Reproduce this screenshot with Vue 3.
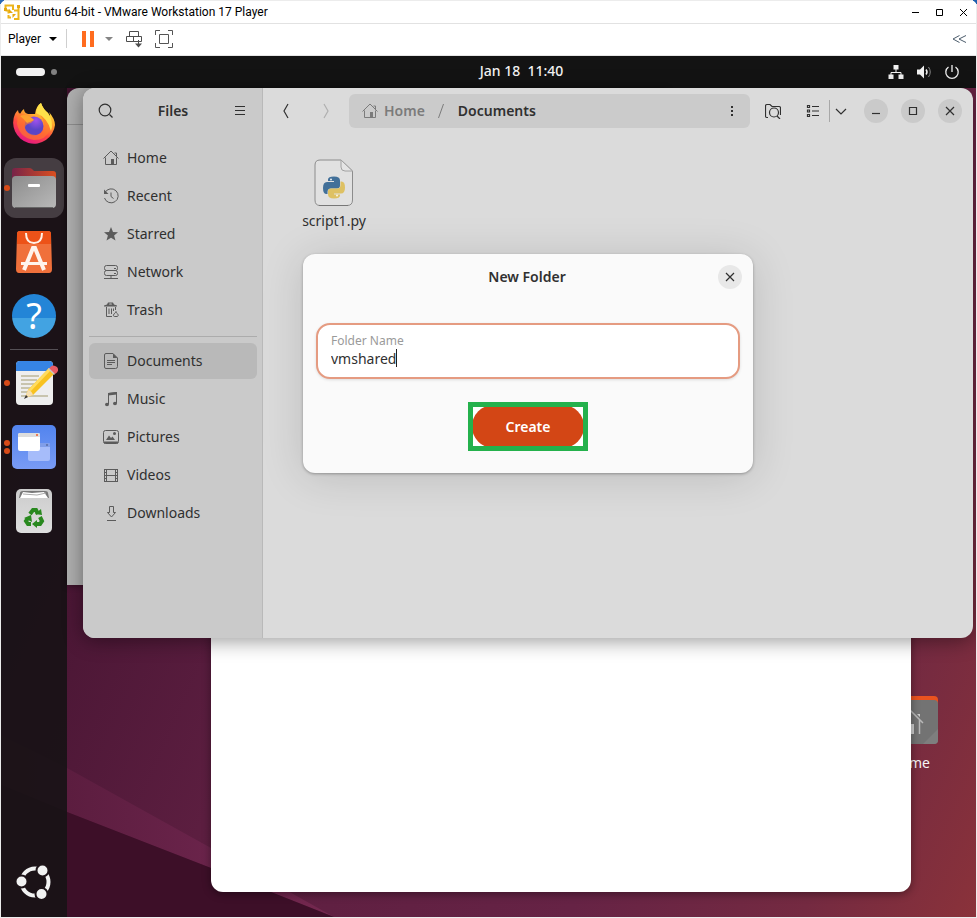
<script setup>
import { ref } from 'vue'

const folderName = ref('vmshared')

const homeLine = 'M.5 8.5 8 1 15.500 8.500M2.500 7.500V14.500H13.500V7.500M11.500 3H13.500V6'
const homeFill = 'M8 9h3v5.500H8z'

const places = [
  { name: 'Home', line: homeLine, fill: homeFill },
  { name: 'Recent', line: 'M2 4.5A7 7 0 1 1 1.5 10M8 4.5V8.5L10.5 10.5', fill: 'M1 1.5V6H5.5z' },
  { name: 'Starred', line: '', fill: 'M8 1l2 5 5 .3-3.900 3.200 1.400 5L8 11.700 3.500 14.500l1.400-5L1 6.300 6 6z' },
  { name: 'Network', line: 'M3.500 1.500h9a2 2 0 0 1 2 2v1a2 2 0 0 1-2 2h-9a2 2 0 0 1-2-2v-1a2 2 0 0 1 2-2zM3.500 6.500h9a2 2 0 0 1 2 2v1a2 2 0 0 1-2 2h-9a2 2 0 0 1-2-2v-1a2 2 0 0 1 2-2zM1 14.500h14M8 11.500v3', fill: 'M11 4h2v1h-2zM11 9h2v1h-2z' },
  { name: 'Trash', line: 'M3.500 5V14.500H9M6 6.500V12M8.500 6.500V12M10.500 6.500V9M12.500 5V8M13 9.500c0 1.500-2 1.500-2.500 3.500-.3 1.200.5 1.500 1.500 1.500h2c1 0 1.500-1 1-2s-1.500-.7-2-3z', fill: 'M1 4.500V3.500L4 2.500 5 .5H10L11 2.500 14 3.500V4.500zM6 2.500H9L8.500 1.500H6.500z' }
]

const folders = [
  { name: 'Documents', active: true, line: 'M3 .5H10L14.500 5V13.500a2 2 0 0 1-2 2H3a1.500 1.500 0 0 1-1.500-1.500V2A1.500 1.500 0 0 1 3 .5zM4 7.500H12M4 9.500H12M4 11.500H9', fill: 'M10 .5V5H14.500z' },
  { name: 'Music', line: 'M5.500 13V2.500L13.500 1.500V12', fill: 'M5 2 14 1V3.500L5 4.500zM2 13.500a2 1.800 0 1 0 4 0a2 1.800 0 1 0-4 0M10 12.500a2 1.800 0 1 0 4 0a2 1.800 0 1 0-4 0' },
  { name: 'Pictures', line: 'M2.500 1.500h11a2 2 0 0 1 2 2V12.500a2 2 0 0 1-2 2h-11a2 2 0 0 1-2-2V3.500a2 2 0 0 1 2-2z', fill: 'M3 11 6 6.500 8 9 9.500 7.500 12 11zM1 12.500H15V14.500H1zM10 4.500a1.500 1.500 0 1 0 3 0a1.500 1.500 0 1 0-3 0' },
  { name: 'Videos', line: 'M3.500 2V14.500M12.500 2V14.500M3.500 2.500H12.500M3.500 8.500H12.500M3.500 14.500H12.500M1.500 2V15M14.500 2V15', fill: 'M1 2h3v1H1zM1 5h3v1H1zM1 8h3v1H1zM1 11h3v1H1zM1 14h3v1H1zM12 2h3v1h-3zM12 5h3v1h-3zM12 8h3v1h-3zM12 11h3v1h-3zM12 14h3v1h-3z' },
  { name: 'Downloads', line: 'M6.500 1.500H10.500V7.500H12.500L8.500 12 4.500 7.500H6.500zM4 15.500H13', fill: '' }
]
</script>

<template>
  <div class="app">
    <header class="titlebar">
      <svg class="logo" viewBox="0 0 16 17" aria-hidden="true">
        <path d="M1.500 6V1.500H9V6M4.500 9.500V6.500H1.500M7 13.500H4.500V11M10 6.500H14.500V15H10M14.500 2V6" fill="none" stroke="#edb51c" stroke-width="2" />
        <path d="M5 5 9 9H5zM12 10 8.500 14V10zM13 1h3v3h-3zM0 4h3v3H0z" fill="#e6a80f" />
      </svg>
      <span class="caption">Ubuntu 64-bit - VMware Workstation 17 Player</span>
      <div class="frame-buttons">
        <button aria-label="Minimize"><svg viewBox="0 0 9 9"><path d="M1 4.500H8" /></svg></button>
        <button aria-label="Maximize"><svg viewBox="0 0 9 9"><path d="M1.500 1.500H7.500V7.500H1.500z" /></svg></button>
        <button aria-label="Close"><svg viewBox="0 0 9 9"><path d="M1 1 8 8M8 1 1 8" /></svg></button>
      </div>
    </header>

    <nav class="toolbar" aria-label="Player controls">
      <button class="player">Player <svg class="caret" viewBox="0 0 8 4"><path d="M0 0H8L4 4z" fill="#000" /></svg></button>
      <span class="divider"></span>
      <button class="pause" aria-label="Pause"><svg viewBox="0 0 12 16"><path d="M0 0H4V16H0zM8 0H12V16H8z" fill="#ff6c1f" /></svg></button>
      <button class="more" aria-label="Power options"><svg class="caret" viewBox="0 0 8 4"><path d="M0 0H8L4 4z" fill="#858585" /></svg></button>
      <button class="keys" aria-label="Send Ctrl+Alt+Del">
        <svg viewBox="0 0 18 18"><path d="M4.500 1.500H13.500V6.500H4.500zM1.500 6.500H8.500V11.500H1.500zM8.500 6.500H16.500V11.500H8.500zM13.500 10V15" fill="none" stroke="#4d4d4d" /><path d="M10 13.500H17L13.500 17.500z" fill="#4d4d4d" /></svg>
      </button>
      <button class="full" aria-label="Full screen">
        <svg viewBox="0 0 18 18"><path d="M.5 5V.5H5M13 .5H17.500V5M17.500 13V17.500H13M5 17.500H.5V13M4.500 4.500H13.500V13.500H4.500z" fill="none" stroke="#555" /></svg>
      </button>
      <button class="collapse" aria-label="Collapse toolbar">
        <svg viewBox="0 0 15 8"><path d="M7.500 .5 1 4 7.500 7.500M14 .5 7 4 14 7.500" fill="none" stroke="#4b5b6b" /></svg>
      </button>
    </nav>

    <main class="desktop">
      <svg class="wallpaper" viewBox="0 0 975 861" preserveAspectRatio="none" aria-hidden="true">
        <defs>
          <linearGradient id="wall" x1="0" y1="430" x2="975" y2="861" gradientUnits="userSpaceOnUse">
            <stop offset="0" stop-color="#431330" />
            <stop offset=".3" stop-color="#5c1e40" />
            <stop offset=".65" stop-color="#662345" />
            <stop offset=".85" stop-color="#742a41" />
            <stop offset="1" stop-color="#8a323a" />
          </linearGradient>
          <linearGradient id="beam" x1="0" x2="1"><stop stop-color="#551a3a" /><stop offset=".65" stop-color="#6b244b" /><stop offset="1" stop-color="#74284f" /></linearGradient>
        </defs>
        <path d="M0 0H975V861H0z" fill="url(#wall)" />
        <path d="M0 679 66 712 210 792 333 861 210 812 66 756 0 729z" fill="url(#beam)" />
        <path d="M0 729 66 756 210 812 270 836 333 861H0z" fill="#3d0f28" />
      </svg>

      <div class="topbar">
        <div class="workspaces"><i></i><b></b></div>
        <time class="clock">Jan 18&nbsp; 11:40</time>
        <div class="status">
          <svg viewBox="0 0 16 16"><path d="M5.500 1h5v4.500h-5zM.5 10.500h5V15h-5zM10.500 10.500h5V15h-5z" fill="#f2f2f2" /><path d="M8 5V8.500M3 11V8.500H13V11" fill="none" stroke="#f2f2f2" /></svg>
          <svg viewBox="0 0 16 16"><path d="M1 5.500H4L8 1.500V14.500L4 10.500H1z" fill="#f2f2f2" /><path d="M10 5.500Q12 8 10 10.500" fill="none" stroke="#f2f2f2" stroke-width="1.500" /><path d="M12.500 3Q16 8 12.500 13" fill="none" stroke="#888" /></svg>
          <svg viewBox="0 0 16 16"><path d="M4.500 3A6.200 6.200 0 1 0 11.500 3M8 1V8" fill="none" stroke="#f2f2f2" stroke-width="1.300" /></svg>
        </div>
      </div>

      <aside class="dock" aria-label="Dock">
        <div class="slot">
          <svg class="app-icon" viewBox="0 0 44 44">
            <defs>
              <linearGradient id="ff" x1=".8" y1="0" x2=".3" y2="1"><stop stop-color="#fff44f" /><stop offset=".35" stop-color="#ffad2d" /><stop offset=".65" stop-color="#ff4a40" /><stop offset="1" stop-color="#e31587" /></linearGradient>
              <radialGradient id="globe" cx=".6" cy=".2"><stop stop-color="#a052ed" /><stop offset="1" stop-color="#5a45c6" /></radialGradient>
            </defs>
            <path d="M3 12Q4 10 6 8Q6 11 8 12Q10 8 12 7Q12 11 16 12H23Q24 4 29 1Q31 7 36 11Q37 13 38 14Q38 12 37 10Q43 17 43 23A21 21 0 1 1 3 12z" fill="url(#ff)" />
            <circle cx="22" cy="24" r="9.500" fill="url(#globe)" />
            <path d="M6 10Q8 12 13 13L16 16Q22 16 22 18Q20 21 16 22Q13 23 13 26Q15 33 24 33Q32 32 32 24Q32 18 28 13Q38 17 38 28Q34 38 22 38Q8 36 5 22z" fill="#ff7b2c" opacity=".65" />
            <path d="M8 14Q15 11 22 18Q18 20 15 21Q12 17 8 14z" fill="#ffa22f" />
            <path d="M24 11Q25 4 29 1Q31 7 36 11Q42 20 39 29Q35 15 24 11z" fill="#ffe04a" />
          </svg>
        </div>
        <div class="slot">
          <div class="active-tile">
            <svg class="app-icon" viewBox="0 0 44 44">
              <defs><linearGradient id="fold" x1="0" x2="1" y2="0"><stop stop-color="#772348" /><stop offset="1" stop-color="#dc4f20" /></linearGradient><linearGradient id="metal" y2="1" x2="1"><stop stop-color="#8c8c8c" /><stop offset="1" stop-color="#b9b9b9" /></linearGradient></defs>
              <path d="M0 16V5Q0 2 3 2H17Q19 2 20 3L22 5H41Q44 5 44 8V18H0z" fill="url(#fold)" />
              <rect x="0" y="10" width="44" height="32" rx="4" fill="url(#metal)" /><path d="M3 41.500H41" stroke="#666" /><rect x="16" y="18" width="12" height="3" rx="1" fill="#fff" />
            </svg>
          </div>
          <span class="dots"><i></i></span>
        </div>
        <div class="slot">
          <svg class="app-icon" viewBox="0 0 44 44">
            <path d="M8 1H36Q39 1 39 4L40 39Q40 43 37 43H7Q4 43 4 39L5 4Q5 1 8 1z" fill="#f0703b" /><path d="M8 1H36Q39 1 39 4V14H5V4Q5 1 8 1z" fill="#ed5218" />
            <path d="M14 3Q14 13 22 13Q30 13 30 3" fill="none" stroke="#fff1e8" stroke-width="2" />
            <path d="M12 40 21 18H23L32 40" fill="none" stroke="#fff4ed" stroke-width="4" /><path d="M9 33.500H35" stroke="#fff4ed" stroke-width="3" />
          </svg>
        </div>
        <div class="slot">
          <div class="help">?</div>
        </div>
        <hr class="dock-line">
        <div class="slot">
          <svg class="app-icon wide" viewBox="0 0 48 48">
            <rect x="6" y="2" width="37" height="44" rx="4" fill="#eee" /><path d="M10 2H39Q43 2 43 6V12H6V6Q6 2 10 2z" fill="#3684e4" />
            <path d="M11 17H29M11 21H27M11 25H25M11 29H22M11 33H19M11 37H38" stroke="#c8c4ae" stroke-width="2" />
            <path d="M15 39 18 31 39 9Q44 9 45 14L23 36z" fill="#f8c220" /><path d="M18 31 39 9 41 11 20 33z" fill="#ffdc60" /><path d="M15 39 18 31Q22 32 23 36z" fill="#f6deb0" /><path d="M14 40 16 36 18 38z" fill="#333" /><path d="M39 10Q42 4 47 8Q50 12 45 15z" fill="#e95d66" /><path d="M38 10 44 16 45 15 39 9z" fill="#c7c7c7" />
          </svg>
          <span class="dots"><i></i></span>
        </div>
        <div class="slot">
          <svg class="app-icon" viewBox="0 0 44 44">
            <defs><linearGradient id="blue" x2="0" y2="1"><stop stop-color="#5284ee" /><stop offset="1" stop-color="#799bf5" /></linearGradient></defs>
            <rect width="44" height="44" rx="5" fill="url(#blue)" /><rect x="16" y="18" width="22" height="18" rx="2" fill="#a6bcfa" /><path d="M18 18H36Q38 18 38 20V22H16V20Q16 18 18 18z" fill="#819ee9" /><circle cx="35" cy="20" r="1" fill="#5a6ca0" />
            <rect x="6" y="8" width="22" height="18" rx="2" fill="#fff" /><path d="M8 8H26Q28 8 28 10V12H6V10Q6 8 8 8z" fill="#ddd" /><circle cx="25" cy="10" r="1" fill="#ed592b" />
          </svg>
          <span class="dots"><i></i><i></i></span>
        </div>
        <div class="slot">
          <svg class="app-icon" viewBox="0 0 44 44">
            <defs><linearGradient id="bin" x2="0" y2="1"><stop stop-color="#ccc" /><stop offset="1" stop-color="#dedede" /></linearGradient></defs>
            <rect x="4" width="36" height="44" rx="5" fill="url(#bin)" /><path d="M7 9 8 4Q8 2 11 2H33Q36 2 36 4L37 9z" fill="#777" /><path d="M8 9 11 3 20 4 32 3 36 9z" fill="#fff" /><path d="M11 5 25 6 34 4" stroke="#aaa" fill="none" />
            <g fill="none" stroke="#29891f" stroke-width="4"><path d="M18 25 21 21H24L26 25" /><path d="M28 28 30 32 28 35H23" /><path d="M19 35H16L14 32 16 29" /></g>
            <path d="M23 25 30 26 29 20zM25 31V39L20 35zM12 29 19 26 20 33z" fill="#29891f" />
          </svg>
        </div>
        <div class="slot launcher">
          <svg class="ubuntu" viewBox="0 0 36 36"><circle cx="19" cy="18" r="13.500" fill="none" stroke="#f2f2f2" stroke-width="4" /><g fill="#f2f2f2" stroke="#1d1318" stroke-width="2"><circle cx="5.500" cy="17.500" r="6" /><circle cx="26.500" cy="6.500" r="6" /><circle cx="25.500" cy="30" r="6" /></g></svg>
        </div>
      </aside>

      <div class="desktop-home">
        <svg viewBox="0 0 56 48"><path d="M0 20V4Q0 0 4 0H52Q56 0 56 4V20z" fill="#e9531f" /><rect y="4" width="56" height="44" rx="4" fill="#737373" /><path d="M41 48 56 33V44Q56 48 52 48z" fill="#7e7e7e" /><path d="M14 27 27.500 13.500 41 27M17.500 24V38M37.500 24V38" fill="none" stroke="#b8b8b8" stroke-width="1.500" /><path d="M27 28h5v10h-5zM35 18h3v3z" fill="#ccc" /></svg>
        <span>Home</span>
      </div>

      <section class="blank-window"></section>
      <section class="rear-window"><div></div></section>

      <section class="files">
        <aside class="sidebar">
          <div class="side-head">
            <button class="plain" aria-label="Search"><svg class="icon" viewBox="0 0 16 16"><circle cx="7" cy="7" r="5.800" /><path d="M11.500 11.500 14.500 14.500" /></svg></button>
            <h1>Files</h1>
            <button class="plain" aria-label="Menu"><svg class="icon" viewBox="0 0 16 16"><path d="M3 3.500H13M3 7.500H13M3 11.500H13" /></svg></button>
          </div>
          <ul>
            <li v-for="p in places" :key="p.name">
              <a href="#"><svg class="icon dim" viewBox="0 0 16 16"><path :d="p.line" /><path class="solid" :d="p.fill" /></svg><span class="text">{{ p.name }}</span></a>
            </li>
          </ul>
          <hr>
          <ul>
            <li v-for="p in folders" :key="p.name">
              <a href="#" :class="{ active: p.active }"><svg class="icon dim" viewBox="0 0 16 16"><path :d="p.line" /><path class="solid" :d="p.fill" /></svg><span class="text">{{ p.name }}</span></a>
            </li>
          </ul>
        </aside>

        <div class="content">
          <div class="content-head">
            <button class="plain" aria-label="Back"><svg class="icon" viewBox="0 0 16 16"><path d="M10 1 6 8 10 15" /></svg></button>
            <button class="plain forward" aria-label="Forward" disabled><svg class="icon" viewBox="0 0 16 16"><path d="M6 1 10 8 6 15" /></svg></button>
            <div class="pathbar">
              <svg class="icon faded" viewBox="0 0 16 16"><path :d="homeLine" /><path class="solid" :d="homeFill" /></svg>
              <a href="#" class="text">Home</a>
              <svg class="slash" viewBox="0 0 6 16"><path d="M5.500 1 .5 15" /></svg>
              <strong class="text">Documents</strong>
              <button class="plain" aria-label="Folder menu"><svg class="icon" viewBox="0 0 16 16"><path class="solid" d="M7 3h2v2H7zM7 7h2v2H7zM7 11h2v2H7z" /></svg></button>
            </div>
            <button class="plain find" aria-label="Search folder"><svg class="icon" viewBox="0 0 16 16"><path d="M3 14.500H2Q.5 14.500 .5 13V3Q.5 1.500 2 1.500H5L7 3.500H14Q15.500 3.500 15.500 5V12" /><circle cx="9" cy="9.500" r="4.500" /><path d="M12 13 15 16" /></svg></button>
            <div class="views">
              <button class="plain" aria-label="List view"><svg class="icon" viewBox="0 0 16 16"><path d="M2.500 2.500h2v2h-2zM2.500 7h2v2h-2zM2.500 11.500h2v2h-2zM7 3.500h7M7 8h7M7 12.500h7" /></svg></button>
              <button class="plain chevron" aria-label="View options"><svg class="icon" viewBox="0 0 16 16"><path d="M3 6 8 11 13 6" /></svg></button>
            </div>
            <div class="controls">
              <button class="round" aria-label="Minimize window"><svg class="icon" viewBox="0 0 16 16"><path d="M4 10.500H12" /></svg></button>
              <button class="round" aria-label="Maximize window"><svg class="icon" viewBox="0 0 16 16"><path d="M4.500 4.500H11.500V11.500H4.500z" /></svg></button>
              <button class="round" aria-label="Close window"><svg class="icon" viewBox="0 0 16 16"><path d="M4 4 12 12M12 4 4 12" /></svg></button>
            </div>
          </div>
          <div class="file">
            <svg viewBox="0 0 40 48">
              <path d="M6 1H27L38.500 12V41Q38.500 46.500 33 46.500H6Q1 46.500 1 41V6Q1 1 6 1z" fill="#e1e1e1" stroke="#8c8c8c" /><path d="M27 1V8Q27 12 31 12H38.500z" fill="#e5e5e5" stroke="#a2a2a2" />
              <path d="M5 46.500H34" stroke="#777" />
              <path d="M20 17.500q6 0 6 4v5q0 3-3 3h-6q-3.500 0-3.500 3.500v2h-1q-3.500 0-3.500-6t4-6h7v-1h-6v-1.500q0-3 6-3z" fill="#427099" />
              <path d="M20 39.500q-6 0-6-4v-3q0-3 3-3h6q3.500 0 3.500-3.500v-3.500h1q3.500 0 3.500 6t-4 6h-7v1h6v1q0 3-6 3z" fill="#dec163" />
              <circle cx="17" cy="20.500" r="1" fill="#e6eef3" /><circle cx="23" cy="36.500" r="1" fill="#fff5d6" />
            </svg>
            <span>script1.py</span>
          </div>
        </div>

        <div class="overlay">
          <form class="dialog" role="dialog" aria-labelledby="dialog-title" @submit.prevent>
            <div class="dialog-head">
              <h2 id="dialog-title">New Folder</h2>
              <button type="button" class="round" aria-label="Close dialog"><svg class="icon" viewBox="0 0 16 16"><path d="M4 4 12 12M12 4 4 12" /></svg></button>
            </div>
            <div class="field">
              <label for="folder-name">Folder Name</label>
              <div class="entry"><input id="folder-name" v-model="folderName" size="1" autocomplete="off" spellcheck="false"><span class="cursor"></span></div>
            </div>
            <div class="highlight"><button class="create" type="submit">Create</button></div>
          </form>
        </div>
      </section>
    </main>
  </div>
</template>

<style>
body {
  margin: 0;
}
</style>

<style scoped>
* {
  box-sizing: border-box;
}

.app {
  display: flex;
  flex-direction: column;
  min-height: 100vh;
  padding: 1px;
  background: linear-gradient(135deg, #2a69b8 3px, transparent 3px), linear-gradient(225deg, #1d5fae 3px, transparent 3px), #ececec;
  font-family: "Noto Sans", "Open Sans", sans-serif;
  font-size: 14px;
  color: #303030;
}

button {
  display: flex;
  align-items: center;
  justify-content: center;
  padding: 0;
  border: 0;
  background: none;
  font: inherit;
  color: inherit;
}

svg {
  display: block;
  flex: none;
}

a {
  color: inherit;
  text-decoration: none;
}

h1,
h2 {
  margin: 0;
  font-size: 14px;
  font-weight: 600;
}

h1,
.text {
  padding-bottom: 2px;
}

.titlebar {
  display: flex;
  align-items: center;
  height: 23px;
  padding: 0 8px 0 3px;
  border-bottom: 1px solid #e2e2e2;
  border-radius: 4px 4px 0 0;
  background: #fff;
  font-family: Roboto, sans-serif;
  font-size: 12px;
  color: #000;
}

.logo {
  width: 16px;
  height: 17px;
  margin-right: 3px;
}

.frame-buttons {
  display: flex;
  gap: 15px;
  margin-left: auto;
}

.frame-buttons svg {
  width: 9px;
  height: 9px;
  fill: none;
  stroke: #000;
}

.toolbar {
  display: flex;
  align-items: center;
  height: 32px;
  padding: 0 9px 2px 7px;
  border-bottom: 1px solid #e6e6e6;
  background: #fff;
  font-family: Roboto, sans-serif;
  font-size: 12px;
  color: #000;
}

.player {
  gap: 8px;
}

.caret {
  width: 8px;
  height: 4px;
}

.divider {
  width: 1px;
  height: 19px;
  margin: 0 15px 0 9px;
  background: #cfcfcf;
}

.pause svg {
  width: 12px;
  height: 16px;
}

.more {
  margin: 0 12px 0 11px;
}

.keys svg,
.full svg {
  width: 18px;
  height: 18px;
}

.full {
  margin-left: 12px;
}

.collapse {
  margin-left: auto;
}

.collapse svg {
  width: 15px;
  height: 8px;
}

.desktop {
  position: relative;
  display: grid;
  flex: 1;
  grid-template-rows: 32px 1fr;
  overflow: hidden;
  background: #4a1733;
}

.wallpaper {
  position: absolute;
  inset: 0;
  width: 100%;
  height: 100%;
}

.topbar {
  position: relative;
  display: grid;
  grid-template-columns: 66px 1fr auto 1fr;
  align-items: center;
  padding-bottom: 1px;
  background: #131313;
  color: #f2f2f2;
}

.workspaces {
  display: flex;
  align-items: center;
  gap: 6px;
  padding-left: 15px;
}

.workspaces i {
  width: 29px;
  height: 8px;
  border-radius: 4px;
  background: #f2f2f2;
}

.workspaces b {
  width: 6px;
  height: 6px;
  border-radius: 3px;
  background: #828282;
}

.clock {
  grid-column: 3;
  padding-bottom: 2px;
  font-weight: 500;
}

.status {
  display: flex;
  gap: 12px;
  justify-self: end;
  padding-right: 16px;
}

.status svg {
  width: 16px;
  height: 16px;
}

.dock {
  position: relative;
  display: flex;
  flex-direction: column;
  width: 66px;
  padding: 4px 0 3px;
  background: rgba(24, 18, 22, 0.92);
}

.slot {
  position: relative;
  display: grid;
  place-items: center;
  height: 64px;
}

.app-icon {
  width: 44px;
  height: 44px;
}

.wide {
  width: 48px;
  height: 48px;
}

.active-tile {
  display: grid;
  place-items: center;
  width: 60px;
  height: 60px;
  border-radius: 12px;
  background: #453d42;
}

.dots {
  position: absolute;
  left: 3px;
  display: grid;
  gap: 2px;
}

.dots i {
  width: 6px;
  height: 6px;
  border-radius: 3px;
  background: #d84b19;
}

.help {
  width: 44px;
  height: 44px;
  border-radius: 50%;
  background: linear-gradient(#2385d7 55%, #42a3e2 55%);
  color: #fff;
  font-size: 36px;
  line-height: 44px;
  text-align: center;
}

.dock-line {
  width: 48px;
  height: 1px;
  margin: 1px auto;
  border: 0;
  background: #555055;
}

.launcher {
  margin-top: auto;
}

.ubuntu {
  width: 36px;
  height: 36px;
}

.desktop-home {
  position: absolute;
  top: 640px;
  right: 38px;
  display: grid;
  justify-items: center;
  gap: 9px;
  color: #f5f5f5;
}

.desktop-home svg {
  width: 56px;
  height: 48px;
}

.blank-window {
  position: absolute;
  top: 432px;
  right: 65px;
  bottom: 25px;
  left: 210px;
  border-radius: 12px;
  background: #fff;
  box-shadow: 0 2px 8px rgba(0, 0, 0, 0.4);
}

.rear-window {
  position: absolute;
  top: 32px;
  bottom: 332px;
  left: 66px;
  width: 600px;
  border-radius: 12px 0 0;
  background: #aeaeae;
  box-shadow: 0 1px 6px rgba(0, 0, 0, 0.4);
}

.rear-window div {
  height: 37px;
  border-bottom: 1px solid #8d8d8d;
}

.files {
  position: absolute;
  top: 32px;
  right: 3px;
  left: 82px;
  display: flex;
  height: 550px;
  border-radius: 12px;
  background: #dbdbdb;
  box-shadow: 0 3px 20px rgba(0, 0, 0, 0.4);
}

.sidebar {
  width: 180px;
  border-right: 1px solid #b9b9b9;
  border-radius: 12px 0 0 12px;
  background: #cacaca;
}

.side-head {
  display: flex;
  align-items: center;
  justify-content: space-between;
  height: 46px;
  padding: 0 14px 0 15px;
}

.icon {
  width: 16px;
  height: 16px;
  fill: none;
  stroke: #303030;
  stroke-width: 1.2;
}

.solid {
  fill: #303030;
  stroke: none;
}

.dim {
  stroke: #5b5b5b;
  stroke-width: 1;
}

.dim .solid {
  fill: #5b5b5b;
}

.faded {
  stroke: #7b7b7b;
  stroke-width: 1;
}

.faded .solid {
  fill: #7b7b7b;
}

.sidebar ul {
  display: grid;
  gap: 2px;
  margin: 6px 5px 6px 6px;
  padding: 0;
  list-style: none;
}

.sidebar hr {
  height: 1px;
  margin: 8px 5px 6px 6px;
  border: 0;
  background: #acacac;
}

.sidebar li a {
  display: flex;
  align-items: center;
  gap: 8px;
  height: 36px;
  padding: 0 14px;
  border-radius: 6px;
}

.sidebar li .active {
  background: #b9b9b9;
}

.content {
  flex: 1;
  min-width: 0;
}

.content-head {
  display: flex;
  align-items: center;
  height: 46px;
  padding: 0 11px 0 15px;
}

.forward {
  margin: 0 15px 0 24px;
  opacity: 0.25;
}

.pathbar {
  display: flex;
  flex: 1;
  align-items: center;
  height: 34px;
  padding: 0 10px 0 13px;
  border-radius: 6px;
  background: #cbcbcb;
  font-weight: 600;
}

.pathbar strong {
  font-weight: 600;
}

.pathbar a {
  margin-left: 6px;
  color: #7b7b7b;
}

.slash {
  width: 6px;
  height: 16px;
  margin: 0 14px 0 13px;
  fill: none;
  stroke: #7b7b7b;
}

.pathbar button {
  margin-left: auto;
}

.find {
  margin: 0 24px 0 15px;
}

.views {
  display: flex;
  align-items: center;
}

.chevron {
  height: 22px;
  margin-left: 8px;
  padding-left: 3px;
  border-left: 1px solid #a8a8a8;
}

.controls {
  display: flex;
  gap: 13px;
  margin-left: 15px;
}

.round {
  width: 24px;
  height: 24px;
  border-radius: 50%;
  background: #cacaca;
}

.file {
  display: grid;
  justify-items: center;
  gap: 4px;
  width: 96px;
  margin: 25px 0 0 23px;
}

.file svg {
  width: 40px;
  height: 48px;
}

.overlay {
  position: absolute;
  inset: 0;
  display: grid;
  place-items: center;
}

.dialog {
  display: flex;
  flex-direction: column;
  width: 450px;
  padding: 0 13px 22px;
  border-radius: 12px;
  background: #fafafa;
  box-shadow: 0 1px 3px rgba(0, 0, 0, 0.3), 0 4px 44px rgba(0, 0, 0, 0.14);
}

.dialog-head {
  display: grid;
  grid-template-columns: 20px 1fr 24px;
  align-items: center;
  height: 46px;
  margin-right: -2px;
}

.dialog-head h2 {
  grid-column: 2;
  text-align: center;
}

.dialog-head .round {
  background: #e8e8e8;
}

.field {
  height: 56px;
  margin-top: 23px;
  padding: 7px 13px;
  border: 2px solid #e59b81;
  border-radius: 14px;
  background: #fff;
  box-shadow: 0 1px 3px rgba(0, 0, 0, 0.12);
}

.field label {
  display: block;
  color: #9a9a9a;
  font-size: 12px;
  line-height: 17px;
}

.entry {
  display: flex;
  align-items: center;
}

.entry input {
  field-sizing: content;
  padding: 0;
  border: 0;
  outline: 0;
  background: none;
  font: inherit;
  line-height: 19px;
  color: inherit;
}

.cursor {
  width: 1px;
  height: 18px;
  background: #202020;
}

.highlight {
  display: grid;
  place-items: center;
  align-self: center;
  width: 120px;
  height: 49px;
  margin-top: 23px;
  overflow: hidden;
  border: 5px solid #24b14c;
  background: #fff;
}

.create {
  width: 112px;
  height: 43px;
  margin: -2px -1px;
  border-radius: 22px;
  background: #d34615;
  color: #fff;
  font-weight: 600;
}
</style>
